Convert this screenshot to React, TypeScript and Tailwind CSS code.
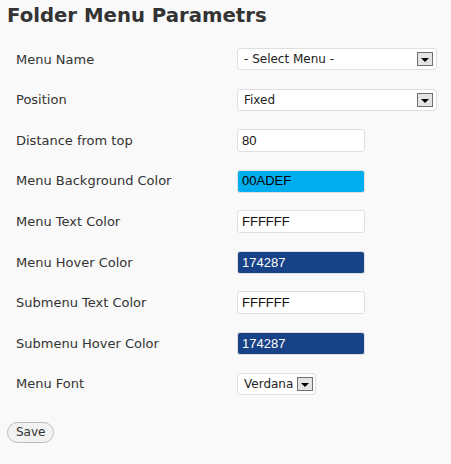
const rows: { label: string; kind: 'select' | 'text' | 'font'; value: string; bg?: string; fg?: string }[] = [
  { label: 'Menu Name', kind: 'select', value: '- Select Menu -' },
  { label: 'Position', kind: 'select', value: 'Fixed' },
  { label: 'Distance from top', kind: 'text', value: '80' },
  { label: 'Menu Background Color', kind: 'text', value: '00ADEF', bg: '#00adef', fg: '#000000' },
  { label: 'Menu Text Color', kind: 'text', value: 'FFFFFF' },
  { label: 'Menu Hover Color', kind: 'text', value: '174287', bg: '#174287', fg: '#ffffff' },
  { label: 'Submenu Text Color', kind: 'text', value: 'FFFFFF' },
  { label: 'Submenu Hover Color', kind: 'text', value: '174287', bg: '#174287', fg: '#ffffff' },
  { label: 'Menu Font', kind: 'font', value: 'Verdana' },
];

const Arrow = () => (
  <div className="w-[16px] h-[14px] border border-[#6f6f6f] bg-[#e4e4e4] flex items-center justify-center">
    <div className="w-0 h-0 border-l-[4px] border-r-[4px] border-t-[4px] border-l-transparent border-r-transparent border-t-black mt-[2px]" />
  </div>
);

export default function App() {
  return (
    <div className="w-[451px] h-[464px] bg-[#f9f9f9] text-[#333] font-['DejaVu_Sans',Verdana,sans-serif] overflow-hidden">
      <h2 className="pl-[7px] pt-[4px] h-[38px] text-[19.7px] font-bold text-[#333] leading-[24px]">Folder Menu Parametrs</h2>

      <div className="flex flex-col pt-[1px]">
        {rows.map((row) => (
          <div key={row.label} className="h-[40.6px] flex items-center">
            <div className="w-[237px] pl-[16px] text-[13px] text-[#333]">{row.label}</div>
            {row.kind === 'select' && (
              <div className="w-[200px] h-[22px] bg-white border border-[#dfdfdf] rounded-[3px] flex items-center justify-between pl-[6px] pr-[3px] text-[12px] text-[#222]">
                <span>{row.value}</span>
                <Arrow />
              </div>
            )}
            {row.kind === 'font' && (
              <div className="w-[79px] h-[22px] bg-white border border-[#dfdfdf] rounded-[3px] flex items-center justify-between pl-[6px] pr-[2px] text-[12px] text-[#222]">
                <span>{row.value}</span>
                <Arrow />
              </div>
            )}
            {row.kind === 'text' && (
              <div
                className="w-[128px] h-[23px] border border-[#dfdfdf] rounded-[3px] flex items-center pl-[4px] text-[13px] font-['Liberation_Sans',Arial,sans-serif]"
                style={{ background: row.bg ?? '#ffffff', color: row.fg ?? '#111111' }}
              >
                {row.value}
              </div>
            )}
          </div>
        ))}
      </div>

      <div className="pl-[7px] pt-[15px]">
        <button className="h-[21px] px-[8px] rounded-full border border-[#bbb] bg-[#f2f2f2] text-[12px] text-[#333] leading-[19px]">Save</button>
      </div>
    </div>
  );
}
